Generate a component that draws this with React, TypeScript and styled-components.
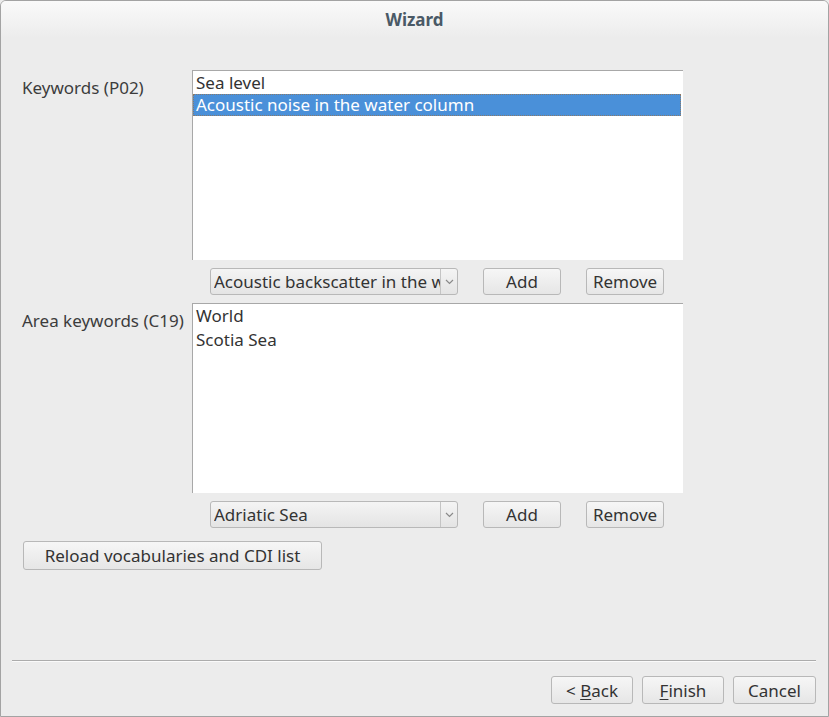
import React from "react";
import styled, { createGlobalStyle } from "styled-components";

const Global = createGlobalStyle`
  html, body { margin: 0; padding: 0; background: #ececec; }
  body { font-family: "Noto Sans", "DejaVu Sans", sans-serif; font-size: 17px; color: #3c3c3c; }
  * { box-sizing: border-box; }
`;

const Window = styled.div`
  width: 829px;
  height: 717px;
  background: #ececec;
  border: 1px solid #a3a3a3;
  border-radius: 6px 6px 0 0;
  display: flex;
  flex-direction: column;
  overflow: hidden;
`;

const TitleBar = styled.div`
  height: 37px;
  flex: none;
  display: flex;
  align-items: center;
  justify-content: center;
  background: linear-gradient(#fafafa, #ececec);
  font-weight: bold;
  font-size: 17px;
  color: #4a5966;
`;

const Body = styled.div`
  flex: 1;
  display: flex;
  flex-direction: column;
  padding: 32px 0 0 21px;
`;

const FieldRow = styled.div`
  display: flex;
  align-items: flex-start;
`;

const Label = styled.div<{ $top: number }>`
  width: 170px;
  flex: none;
  padding-top: ${(p) => p.$top}px;
  color: #3c3c3c;
  font-size: 17px;
  white-space: nowrap;
`;

const ListBox = styled.div<{ $pad: number }>`
  width: 491px;
  height: 190px;
  background: #fff;
  border-top: 1px solid #a8a8a8;
  border-left: 1px solid #a8a8a8;
  padding: ${(p) => p.$pad}px 1px 0 0;
`;

const Item = styled.div<{ $sel?: boolean; $h: number }>`
  height: ${(p) => p.$h}px;
  line-height: ${(p) => p.$h}px;
  padding-left: 3px;
  font-size: 17px;
  white-space: nowrap;
  color: ${(p) => (p.$sel ? "#fff" : "#333")};
  background: ${(p) => (p.$sel ? "#4a90d9" : "transparent")};
  outline: ${(p) => (p.$sel ? "1px dotted #8a7a6a" : "none")};
  outline-offset: -1px;
  margin-right: 1px;
`;

const Controls = styled.div`
  display: flex;
  align-items: center;
  padding-left: 188px;
  height: 43px;
  gap: 25px;
`;

const Combo = styled.div`
  width: 248px;
  height: 27px;
  display: flex;
  align-items: center;
  border: 1px solid #b8b8b8;
  border-radius: 3px;
  background: linear-gradient(#f4f4f4, #e4e4e4);
  padding-left: 3px;
  font-size: 17px;
  color: #333;
  overflow: hidden;
`;

const ComboText = styled.div`
  flex: 1;
  min-width: 0;
  white-space: nowrap;
  overflow: hidden;
`;

const ComboArrow = styled.div`
  width: 17px;
  height: 100%;
  flex: none;
  display: flex;
  align-items: center;
  justify-content: center;
  border-left: 1px solid #c4c4c4;
`;

const Button = styled.div<{ $w: number; $h?: number }>`
  width: ${(p) => p.$w}px;
  height: ${(p) => p.$h ?? 27}px;
  display: flex;
  align-items: center;
  justify-content: center;
  border: 1px solid #b8b8b8;
  border-radius: 3px;
  background: linear-gradient(#f6f6f6, #e6e6e6);
  font-size: 17px;
  color: #333;
  white-space: nowrap;
`;

const Mn = styled.span`
  text-decoration: underline;
  text-underline-offset: 2px;
  text-decoration-thickness: 1px;
`;

const ReloadRow = styled.div`
  padding: 5px 0 0 1px;
`;

const Spacer = styled.div`
  flex: 1;
`;

const Separator = styled.div`
  height: 2px;
  margin: 0 12px 0 11px;
  border-top: 1px solid #acacac;
  border-bottom: 1px solid #fafafa;
`;

const Footer = styled.div`
  display: flex;
  justify-content: flex-end;
  gap: 9px;
  padding: 14px 12px 12px 0;
`;

const Arrow = () => (
  <svg width="9" height="6" viewBox="0 0 9 6">
    <path d="M1 1 L4.5 4.5 L8 1" fill="none" stroke="#8a8a8a" strokeWidth="1.2" />
  </svg>
);

export default function App() {
  return (
    <>
      <Global />
      <Window>
        <TitleBar>Wizard</TitleBar>
        <Body>
          <FieldRow>
            <Label $top={6}>Keywords (P02)</Label>
            <ListBox $pad={1}>
              <Item $h={22}>Sea level</Item>
              <Item $h={22} $sel>Acoustic noise in the water column</Item>
            </ListBox>
          </FieldRow>
          <Controls>
            <Combo>
              <ComboText>Acoustic backscatter in the water column</ComboText>
              <ComboArrow><Arrow /></ComboArrow>
            </Combo>
            <Button $w={78}>Add</Button>
            <Button $w={78}>Remove</Button>
          </Controls>
          <FieldRow>
            <Label $top={6}>Area keywords (C19)</Label>
            <ListBox $pad={0}>
              <Item $h={24}>World</Item>
              <Item $h={24}>Scotia Sea</Item>
            </ListBox>
          </FieldRow>
          <Controls>
            <Combo>
              <ComboText>Adriatic Sea</ComboText>
              <ComboArrow><Arrow /></ComboArrow>
            </Combo>
            <Button $w={78}>Add</Button>
            <Button $w={78}>Remove</Button>
          </Controls>
          <ReloadRow>
            <Button $w={299} $h={29}>Reload vocabularies and CDI list</Button>
          </ReloadRow>
          <Spacer />
        </Body>
        <Separator />
        <Footer>
          <Button $w={82} $h={28}>&lt;&nbsp;<Mn>B</Mn>ack</Button>
          <Button $w={82} $h={28}><Mn>F</Mn>inish</Button>
          <Button $w={83} $h={28}>Cancel</Button>
        </Footer>
      </Window>
    </>
  );
}
